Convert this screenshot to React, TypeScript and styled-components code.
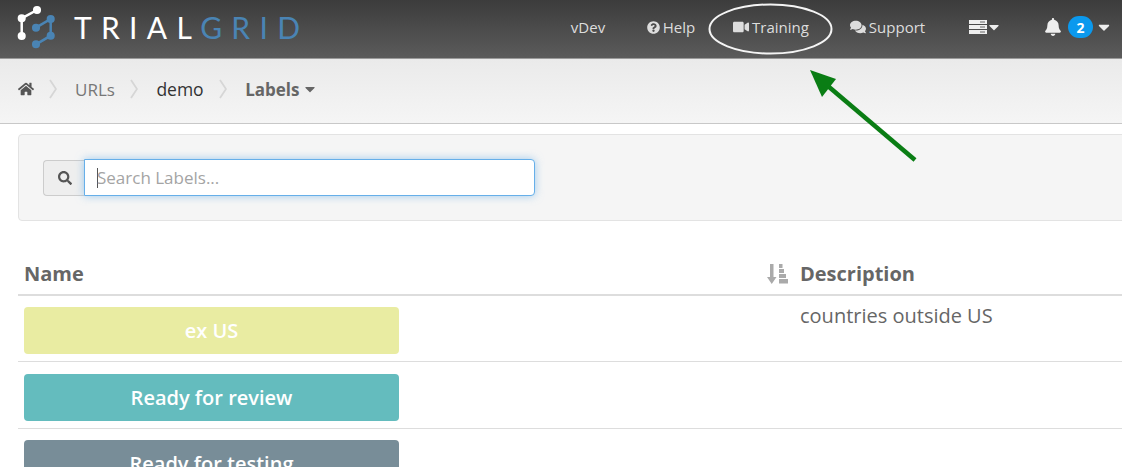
import React from 'react'
import styled, { createGlobalStyle } from 'styled-components'
import {
  FaBell,
  FaCaretDown,
  FaComments,
  FaHome,
  FaQuestionCircle,
  FaSearch,
  FaVideo,
} from 'react-icons/fa'

const labels = [
  { name: 'ex US', color: '#e9eca2', description: 'countries outside US' },
  { name: 'Ready for review', color: '#64bcbe', description: '' },
  { name: 'Ready for testing', color: '#788d98', description: '' },
]

const Logo = () => (
  <LogoWrapper>
    <svg width="58" height="58" viewBox="0 0 58 58">
      <g stroke="#fff" strokeWidth="2.500" fill="#fff">
        <path d="M37 10 L21.700 18.300 L21.700 36" fill="none" />
        <circle cx="37" cy="10" r="2.800" />
        <circle cx="21.700" cy="18.300" r="2.800" />
        <circle cx="21.700" cy="36" r="2.800" />
      </g>
      <g stroke="#4a84b4" strokeWidth="2.500" fill="#4a84b4">
        <path d="M36 27.700 L50.700 19 L50.700 35.700 L36 44.300" fill="none" />
        <circle cx="50.700" cy="19" r="2.800" />
        <circle cx="36" cy="27.700" r="2.800" />
        <circle cx="50.700" cy="35.700" r="2.800" />
        <circle cx="36" cy="44.300" r="2.800" />
      </g>
    </svg>
    <LogoText>
      TRIAL<LogoAccent>GRID</LogoAccent>
    </LogoText>
  </LogoWrapper>
)

const Chevron = () => (
  <ChevronMark width="8" height="20" viewBox="0 0 8 20">
    <path d="M1 1 L7 10 L1 19" fill="none" stroke="#d6d6d6" strokeWidth="1.800" />
  </ChevronMark>
)

const SortIcon = () => (
  <svg width="21" height="20" viewBox="0 0 21 20" fill="#aaa">
    <path d="M3 0 H6.500 V13 H9.500 L4.750 20 L0 13 H3 Z" />
    <rect x="12" y="0" width="3.500" height="4" />
    <rect x="12" y="5" width="5" height="4" />
    <rect x="12" y="10" width="7" height="4" />
    <rect x="12" y="15" width="9" height="4.500" />
  </svg>
)

const ServerIcon = () => (
  <svg width="18" height="14" viewBox="0 0 18 14">
    <rect x="0" y="0" width="18" height="4" fill="#eee" />
    <rect x="0" y="5" width="18" height="4" fill="#eee" />
    <rect x="0" y="10" width="18" height="4" fill="#eee" />
    <rect x="11" y="1.500" width="5" height="1" fill="#666" />
    <rect x="11" y="6.500" width="5" height="1" fill="#666" />
    <rect x="11" y="11.500" width="5" height="1" fill="#666" />
  </svg>
)

export default function App() {
  return (
    <>
      <GlobalStyle />
      <Page>
        <Navbar>
          <Logo />
          <NavList>
            <NavItem $width={88}>vDev</NavItem>
            <NavItem $width={78}>
              <FaQuestionCircle size={13} />
              Help
            </NavItem>
            <NavItem $width={122}>
              <FaVideo size={16} />
              Training
            </NavItem>
            <NavItem $width={111}>
              <FaComments size={16} />
              Support
            </NavItem>
            <NavItem $width={85}>
              <ServerIcon />
              <CaretIcon size={16} />
            </NavItem>
            <NavBell>
              <FaBell size={18} />
              <Badge>2</Badge>
              <CaretIcon size={18} />
            </NavBell>
          </NavList>
        </Navbar>
        <Breadcrumb>
          <HomeIcon size={16} />
          <Chevron />
          <CrumbLink>URLs</CrumbLink>
          <Chevron />
          <CrumbCurrent>demo</CrumbCurrent>
          <Chevron />
          <CrumbMenu>
            Labels <FaCaretDown size={16} />
          </CrumbMenu>
        </Breadcrumb>
        <Content>
          <Well>
            <InputAddon>
              <FaSearch size={14} />
            </InputAddon>
            <SearchField>
              <Caret />
              Search Labels...
            </SearchField>
          </Well>
          <TableHead>
            <NameHead>
              Name
              <SortIcon />
            </NameHead>
            <DescHead>Description</DescHead>
          </TableHead>
          {labels.map((label) => (
            <Row key={label.name}>
              <LabelChip $color={label.color}>{label.name}</LabelChip>
              <Description>{label.description}</Description>
            </Row>
          ))}
        </Content>
        <Annotation width="1122" height="170" viewBox="0 0 1122 170">
          <ellipse cx="770.500" cy="29" rx="61" ry="24.500" fill="none" stroke="#f4f4f4" strokeWidth="2" />
          <path d="M915 160 L822 81" stroke="#0a7d14" strokeWidth="4.500" fill="none" />
          <path d="M810 70 L836 79 L822 97 Z" fill="#0a7d14" />
        </Annotation>
      </Page>
    </>
  )
}

const GlobalStyle = createGlobalStyle`
  html,
  body {
    margin: 0;
    background: #fff;
    overflow: hidden;
  }
  body {
    font-family: 'Open Sans', 'Liberation Sans', sans-serif;
    color: #666;
  }
`

const Page = styled.div`
  position: relative;
  width: 1122px;
  height: 467px;
  overflow: hidden;
`

const Annotation = styled.svg`
  position: absolute;
  top: 0;
  left: 0;
  pointer-events: none;
`

const Navbar = styled.header`
  height: 58px;
  display: flex;
  justify-content: space-between;
  align-items: center;
  background: linear-gradient(#3c3c3c, #5b5b5b);
  border-bottom: 1px solid #9a9a9a;
`

const LogoWrapper = styled.div`
  display: flex;
  align-items: center;
  height: 100%;
`

const LogoText = styled.span`
  font-family: Lato, 'Liberation Sans', sans-serif;
  font-size: 30px;
  font-weight: 400;
  letter-spacing: 9.300px;
  color: #fff;
  margin: 0 0 4px 16px;
`

const LogoAccent = styled.span`
  color: #4a84b4;
`

const NavList = styled.nav`
  display: flex;
  align-items: center;
  height: 100%;
  padding-bottom: 4px;
  box-sizing: border-box;
  color: #ddd;
  font-size: 15px;
`

const NavItem = styled.div<{ $width: number }>`
  width: ${(p) => p.$width}px;
  display: flex;
  align-items: center;
  justify-content: center;
  gap: 3px;
  white-space: nowrap;
`

const NavBell = styled.div`
  width: 94px;
  display: flex;
  align-items: center;
  gap: 6px;
  padding-left: 16px;
  box-sizing: border-box;
  color: #eee;
`

const CaretIcon = styled(FaCaretDown)`
  margin-left: -4px;
  color: #eee;
`

const Badge = styled.span`
  width: 25px;
  height: 22px;
  border-radius: 11px;
  background: #0b99ee;
  color: #fff;
  font-size: 14px;
  font-weight: 700;
  display: flex;
  align-items: center;
  justify-content: center;
`

const Breadcrumb = styled.div`
  height: 65px;
  box-sizing: border-box;
  display: flex;
  align-items: center;
  padding: 0 0 4px 18px;
  background: linear-gradient(#eaeaea, #f5f5f5);
  border-bottom: 1px solid #c8c8c8;
  font-size: 17px;
`

const HomeIcon = styled(FaHome)`
  margin-right: -0.500px;
  color: #555;
`

const ChevronMark = styled.svg`
  margin: 0 18.500px 0 15px;
`

const CrumbLink = styled.span`
  color: #777;
`

const CrumbCurrent = styled.span`
  font-size: 17.500px;
  color: #333;
`

const CrumbMenu = styled.span`
  display: flex;
  align-items: center;
  gap: 3px;
  font-weight: 700;
  color: #666;
`

const Content = styled.main`
  padding: 10px 0 0 18px;
`

const Well = styled.section`
  width: 1140px;
  height: 87px;
  box-sizing: border-box;
  display: flex;
  align-items: center;
  padding-left: 24px;
  background: #f5f5f5;
  border: 1px solid #e3e3e3;
  border-radius: 4px;
`

const InputAddon = styled.div`
  width: 41px;
  height: 36px;
  box-sizing: border-box;
  display: flex;
  align-items: center;
  justify-content: center;
  padding-left: 2px;
  background: #eee;
  border: 1px solid #ccc;
  border-right: 0;
  border-radius: 4px 0 0 4px;
  color: #555;
`

const SearchField = styled.div`
  width: 451px;
  height: 37px;
  box-sizing: border-box;
  display: flex;
  align-items: center;
  padding-left: 12px;
  background: #fff;
  border: 1px solid #66afe9;
  border-radius: 0 4px 4px 0;
  box-shadow: 0 0 8px rgba(102, 175, 233, 0.6);
  font-size: 17px;
  color: #a4a4a4;
`

const Caret = styled.span`
  width: 1px;
  height: 20px;
  margin-right: -1px;
  background: #555;
`

const TableHead = styled.div`
  display: grid;
  grid-template-columns: 776px 1fr;
  height: 75px;
  box-sizing: border-box;
  padding-top: 40px;
  border-bottom: 2px solid #ddd;
  font-size: 20px;
  font-weight: 700;
  color: #666;
  line-height: 26px;
`

const NameHead = styled.div`
  display: flex;
  justify-content: space-between;
  align-items: center;
  height: 26px;
  padding: 0 6px;
`

const DescHead = styled.div`
  padding-left: 6px;
`

const Row = styled.div`
  display: grid;
  grid-template-columns: 770px 1fr;
  height: 66.400px;
  box-sizing: border-box;
  padding: 11.400px 0 0 6px;
  border-bottom: 1px solid #ddd;
`

const LabelChip = styled.div<{ $color: string }>`
  width: 375px;
  height: 47px;
  display: flex;
  align-items: center;
  justify-content: center;
  border-radius: 4px;
  background: ${(p) => p.$color};
  color: #fff;
  font-size: 20px;
  font-weight: 600;
`

const Description = styled.div`
  font-size: 20px;
  line-height: 26px;
  color: #666;
  margin-top: -4px;
  padding-left: 6px;
`
